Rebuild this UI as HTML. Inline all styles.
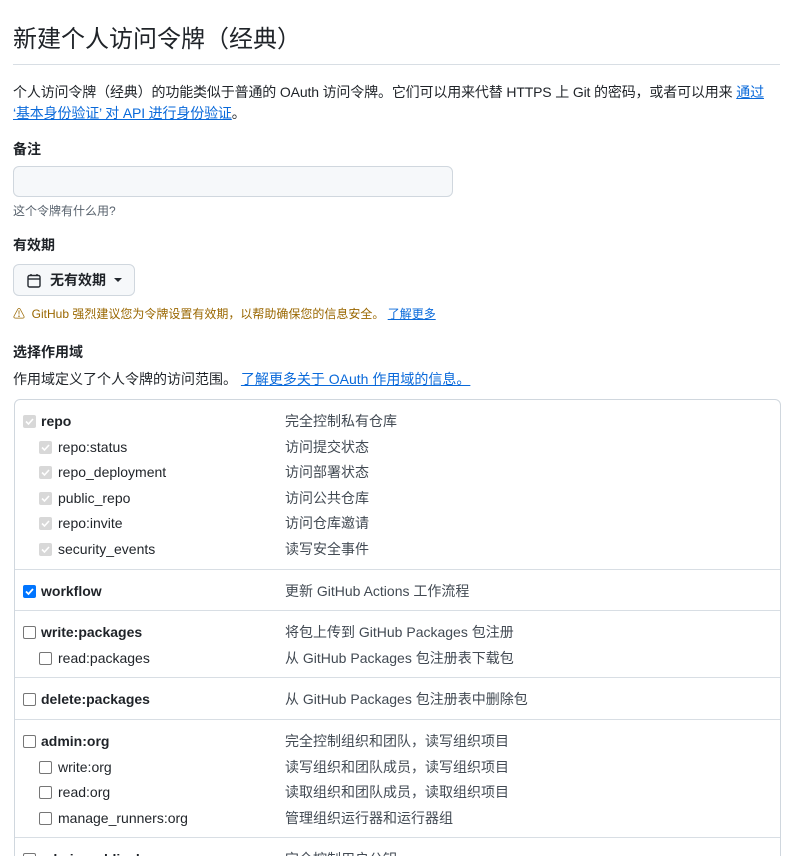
<!DOCTYPE html>
<html style="overflow:hidden;height:856px"><head><meta charset="utf-8">
<style>
*{box-sizing:border-box}
body{margin:0;background:#fff;font-family:"Liberation Sans","Noto Sans CJK SC",sans-serif;color:#1f2328;font-size:14px;width:785px;height:856px;overflow:hidden;position:relative}
.a{position:absolute;white-space:nowrap}
h1{position:absolute;left:13px;top:22px;margin:0;font-size:24px;font-weight:400;line-height:36px}
.hr{position:absolute;left:13px;right:5px;top:64px;height:1px;background:#d8dee4}
a{color:#0969da;text-decoration:underline}
b{font-weight:700}
.inp{position:absolute;left:13px;top:166px;width:440px;height:31px;border:1px solid #d0d7de;border-radius:6px;background:#f6f8fa}
.btn{position:absolute;left:13px;top:264px;width:122px;height:32px;border:1px solid #d0d7de;border-radius:6px;background:#f6f8fa}
.box{position:absolute;left:14px;top:399px;width:767px;height:480px;border:1px solid #d0d7de;border-radius:6px}
.grp{border-top:1px solid #d8dee4;padding:9px 0 6px}
.grp:first-child{border-top:none;padding-top:9px}
.row{height:25.6px;position:relative;line-height:25.6px}
.cb{position:absolute;top:6px;width:13px;height:13px;border:1px solid #767676;border-radius:2px;background:#fff}
.cb.dis{border:none;background:#d8d8d8}
.cb.on{border:none;background:#0075ff}
.cb svg{position:absolute;left:1px;top:1px}
.row .n{position:absolute}
.row .d{position:absolute;left:270px;color:#424a53}
</style></head><body>
<h1>新建个人访问令牌（经典）</h1>
<div class="hr"></div>
<div class="a" style="left:13px;top:82px;line-height:21px;letter-spacing:-0.15px">个人访问令牌（经典）的功能类似于普通的 OAuth 访问令牌。它们可以用来代替 HTTPS 上 Git 的密码，或者可以用来 <a href="#">通过</a><br><a href="#">‘基本身份验证’ 对 API 进行身份验证</a>。</div>
<div class="a" style="left:13px;top:139px;line-height:20px"><b>备注</b></div>
<div class="inp"></div>
<div class="a" style="left:13px;top:203px;font-size:12px;color:#59636e;line-height:16px">这个令牌有什么用?</div>
<div class="a" style="left:13px;top:235px;line-height:20px"><b>有效期</b></div>
<div class="btn">
<svg style="position:absolute;left:12px;top:8px" width="16" height="16" viewBox="0 0 16 16"><rect x="2" y="2.5" width="12" height="11.5" rx="1.5" fill="none" stroke="#24292f" stroke-width="1.4"/><line x1="2" y1="6" x2="14" y2="6" stroke="#24292f" stroke-width="1.4"/><line x1="5" y1="1" x2="5" y2="3" stroke="#24292f" stroke-width="1.4"/><line x1="11" y1="1" x2="11" y2="3" stroke="#24292f" stroke-width="1.4"/></svg>
<span class="a" style="left:36px;top:6px;font-weight:700;line-height:18px">无有效期</span>
<svg style="position:absolute;left:100px;top:13px" width="8" height="5" viewBox="0 0 8 5"><path d="M0 0h8L4 4z" fill="#24292f"/></svg>
</div>
<div class="a" style="left:13px;top:306px;font-size:12px;color:#9a6700;line-height:16px">⚠&nbsp; GitHub 强烈建议您为令牌设置有效期，以帮助确保您的信息安全。 <a href="#">了解更多</a></div>
<div class="a" style="left:13px;top:342px;line-height:20px"><b>选择作用域</b></div>
<div class="a" style="left:13px;top:369px;line-height:20px">作用域定义了个人令牌的访问范围。 <a href="#">了解更多关于 OAuth 作用域的信息。</a></div>
<div class="box">
<div class="grp">
<div class="row"><span class="cb dis" style="left:8px"><svg width="11" height="11" viewBox="0 0 11 11"><path d="M2 5.5l2.5 2.5L9 3" stroke="#fff" stroke-width="1.6" fill="none"/></svg></span><b class="n" style="left:26px">repo</b><span class="d">完全控制私有仓库</span></div>
<div class="row"><span class="cb dis" style="left:24px"><svg width="11" height="11" viewBox="0 0 11 11"><path d="M2 5.5l2.5 2.5L9 3" stroke="#fff" stroke-width="1.6" fill="none"/></svg></span><span class="n" style="left:43px">repo:status</span><span class="d">访问提交状态</span></div>
<div class="row"><span class="cb dis" style="left:24px"><svg width="11" height="11" viewBox="0 0 11 11"><path d="M2 5.5l2.5 2.5L9 3" stroke="#fff" stroke-width="1.6" fill="none"/></svg></span><span class="n" style="left:43px">repo_deployment</span><span class="d">访问部署状态</span></div>
<div class="row"><span class="cb dis" style="left:24px"><svg width="11" height="11" viewBox="0 0 11 11"><path d="M2 5.5l2.5 2.5L9 3" stroke="#fff" stroke-width="1.6" fill="none"/></svg></span><span class="n" style="left:43px">public_repo</span><span class="d">访问公共仓库</span></div>
<div class="row"><span class="cb dis" style="left:24px"><svg width="11" height="11" viewBox="0 0 11 11"><path d="M2 5.5l2.5 2.5L9 3" stroke="#fff" stroke-width="1.6" fill="none"/></svg></span><span class="n" style="left:43px">repo:invite</span><span class="d">访问仓库邀请</span></div>
<div class="row"><span class="cb dis" style="left:24px"><svg width="11" height="11" viewBox="0 0 11 11"><path d="M2 5.5l2.5 2.5L9 3" stroke="#fff" stroke-width="1.6" fill="none"/></svg></span><span class="n" style="left:43px">security_events</span><span class="d">读写安全事件</span></div>
</div>
<div class="grp">
<div class="row"><span class="cb on" style="left:8px"><svg width="11" height="11" viewBox="0 0 11 11"><path d="M2 5.5l2.5 2.5L9 3" stroke="#fff" stroke-width="1.8" fill="none"/></svg></span><b class="n" style="left:26px">workflow</b><span class="d">更新 GitHub Actions 工作流程</span></div>
</div>
<div class="grp">
<div class="row"><span class="cb" style="left:8px"></span><b class="n" style="left:26px">write:packages</b><span class="d">将包上传到 GitHub Packages 包注册</span></div>
<div class="row"><span class="cb" style="left:24px"></span><span class="n" style="left:43px">read:packages</span><span class="d">从 GitHub Packages 包注册表下载包</span></div>
</div>
<div class="grp">
<div class="row"><span class="cb" style="left:8px"></span><b class="n" style="left:26px">delete:packages</b><span class="d">从 GitHub Packages 包注册表中删除包</span></div>
</div>
<div class="grp">
<div class="row"><span class="cb" style="left:8px"></span><b class="n" style="left:26px">admin:org</b><span class="d">完全控制组织和团队，读写组织项目</span></div>
<div class="row"><span class="cb" style="left:24px"></span><span class="n" style="left:43px">write:org</span><span class="d">读写组织和团队成员，读写组织项目</span></div>
<div class="row"><span class="cb" style="left:24px"></span><span class="n" style="left:43px">read:org</span><span class="d">读取组织和团队成员，读取组织项目</span></div>
<div class="row"><span class="cb" style="left:24px"></span><span class="n" style="left:43px">manage_runners:org</span><span class="d">管理组织运行器和运行器组</span></div>
</div>
<div class="grp">
<div class="row"><span class="cb" style="left:8px"></span><b class="n" style="left:26px">admin:public_key</b><span class="d">完全控制用户公钥</span></div>
</div>
</div>
</body></html>
